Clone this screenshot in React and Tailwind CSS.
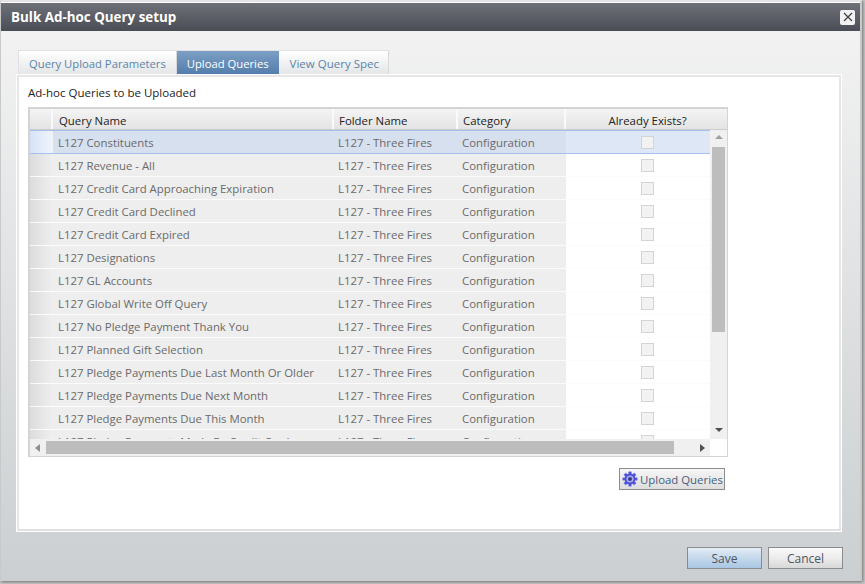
const names = [
  "L127 Constituents",
  "L127 Revenue - All",
  "L127 Credit Card Approaching Expiration",
  "L127 Credit Card Declined",
  "L127 Credit Card Expired",
  "L127 Designations",
  "L127 GL Accounts",
  "L127 Global Write Off Query",
  "L127 No Pledge Payment Thank You",
  "L127 Planned Gift Selection",
  "L127 Pledge Payments Due Last Month Or Older",
  "L127 Pledge Payments Due Next Month",
  "L127 Pledge Payments Due This Month",
  "L127 Pledge Payments Made By Credit Card",
];

function Gear() {
  return (
    <svg width="16" height="16" viewBox="0 0 16 16" className="shrink-0">
      <g fill="#5257dc" stroke="#b9bcf5" strokeWidth="0.4">
        <rect x="6.4" y="0.5" width="3.2" height="15" rx="0.8" />
        <rect x="6.4" y="0.5" width="3.2" height="15" rx="0.8" transform="rotate(45 8 8)" />
        <rect x="6.4" y="0.5" width="3.2" height="15" rx="0.8" transform="rotate(90 8 8)" />
        <rect x="6.4" y="0.5" width="3.2" height="15" rx="0.8" transform="rotate(135 8 8)" />
      </g>
      <circle cx="8" cy="8" r="5.4" fill="#4a4fd0" />
      <circle cx="8" cy="8" r="3.6" fill="#a9adf5" />
      <circle cx="8" cy="8" r="2" fill="#3a3a80" />
    </svg>
  );
}

function Row({ name, selected }) {
  return (
    <div className={selected
      ? "flex h-[24px] shrink-0 border-y border-[#a5c0ec] bg-[#dde7f6]"
      : "flex h-[23px] shrink-0 border-b border-[#fbfbfb] bg-white"}>
      <div className={`w-[23px] shrink-0 ${selected ? "bg-gradient-to-r from-[#d5e3f8] to-[#f0f5fc]" : "bg-gradient-to-r from-[#dcdcdc] to-[#efefef]"}`} />
      <div className={`flex w-[513px] shrink-0 items-center pt-[2px] text-[#6a6a6a] ${selected ? "bg-[#d6e0ee]" : "bg-[#eeeeee]"}`}>
        <div className="w-[281px] shrink-0 pl-[5px] whitespace-nowrap">{name}</div>
        <div className="w-[124px] shrink-0 pl-[4px] whitespace-nowrap">L127 - Three Fires</div>
        <div className="w-[108px] shrink-0 pl-[4px] whitespace-nowrap">Configuration</div>
      </div>
      <div className="flex w-[144px] shrink-0 items-center pl-[75px]">
        <div className="h-[13px] w-[13px] border border-[#d4d4d4] bg-[#f2f2f2]" />
      </div>
    </div>
  );
}

export default function App() {
  return (
    <div className="h-[584px] w-[865px] overflow-hidden bg-[#c8c8c8] text-[11.4px] font-['Open_Sans',_'Noto_Sans',_sans-serif]">
      <div className="flex h-[581px] w-[862px] flex-col border-t-2 border-l border-r-2 border-[#c9c9c9] border-t-[#e4e4e4] bg-gradient-to-b from-[#f4f4f4] to-[#cbcfd1] shadow-[1px_1px_3px_#707070]">
        <div className="flex h-[29px] shrink-0 items-center justify-between border-t border-white bg-gradient-to-b from-[#6e7178] to-[#4a4d55] pl-[10px] pr-[5px] text-[13.4px] font-bold text-white">
          <span>Bulk Ad-hoc Query setup</span>
          <div className="flex h-[15px] w-[15px] items-center justify-center rounded-[2px] bg-[#f2f2f2]">
            <svg width="10" height="10" viewBox="0 0 10 10" stroke="#3c3f46" strokeWidth="1.2"><path d="M1 1 L9 9 M9 1 L1 9" /></svg>
          </div>
        </div>

        <div className="flex flex-1 flex-col px-[16px] pt-[19px]">
          <div className="ml-[1px] flex h-[25px] w-fit shrink-0 border-t border-l border-[#e0e0e0] text-[11.25px]">
            <div className="flex items-center border-r border-[#d8d8d8] bg-gradient-to-b from-[#ffffff] to-[#e2e5e6] px-[10px] pt-[2px] text-[#5b84a8]">Query Upload Parameters</div>
            <div className="flex items-center bg-gradient-to-b from-[#7d9fc4] to-[#517cab] px-[10px] pt-[2px] text-white">Upload Queries</div>
            <div className="flex items-center border-r border-[#d8d8d8] bg-gradient-to-b from-[#ffffff] to-[#e2e5e6] pl-[11px] pr-[9px] pt-[2px] text-[11.5px] text-[#5b84a8]">View Query Spec</div>
          </div>

          <div className="flex h-[456px] w-[824px] shrink-0 flex-col border-2 border-[#e6e6e6] border-b-[#e0e0e0] bg-white pl-[9px] outline outline-1 outline-white">
            <div className="flex h-[30px] shrink-0 items-center pt-[1px] text-[11.5px] text-[#222]">Ad-hoc Queries to be Uploaded</div>

            <div className="flex h-[350px] w-[700px] shrink-0 flex-col border-2 border-r border-b border-[#d4d4d4]">
              <div className="flex h-[21px] shrink-0 border-b border-[#cccccc] bg-gradient-to-b from-[#f4f4f4] to-[#e4e4e4] text-[#222]">
                <div className="w-[23px] shrink-0 border-r-2 border-[#fafafa]" />
                <div className="flex w-[281px] shrink-0 items-center border-r-2 border-[#fafafa] pl-[6px] pt-[3px]">Query Name</div>
                <div className="flex w-[124px] shrink-0 items-center border-r-2 border-[#fafafa] pl-[5px] pt-[3px]">Folder Name</div>
                <div className="flex w-[108px] shrink-0 items-center border-r-2 border-[#fafafa] pl-[5px] pt-[3px]">Category</div>
                <div className="flex flex-1 items-center justify-center pl-[2px] pt-[3px]">Already Exists?</div>
              </div>

              <div className="flex min-h-0 flex-1">
                <div className="flex min-w-0 flex-1 flex-col">
                  <div className="flex h-[309px] flex-col overflow-hidden">
                    {names.map((n, i) => (
                      <Row key={n} name={n} selected={i === 0} />
                    ))}
                  </div>
                  <div className="flex h-[17px] shrink-0 items-center bg-[#f0f0f0] px-[4px]">
                    <svg width="8" height="8" viewBox="0 0 8 8" className="shrink-0"><path d="M6 0 L6 8 L1 4 Z" fill="#8f8f8f" /></svg>
                    <div className="ml-[4px] h-[13px] w-[628px] bg-[#bdbdbd]" />
                    <div className="flex-1" />
                    <svg width="8" height="8" viewBox="0 0 8 8" className="shrink-0"><path d="M2 0 L2 8 L7 4 Z" fill="#505050" /></svg>
                  </div>
                </div>
                <div className="flex w-[17px] shrink-0 flex-col">
                  <div className="flex h-[309px] flex-col items-center bg-[#f0f0f0] pt-[3px]">
                    <svg width="8" height="8" viewBox="0 0 8 8" className="shrink-0"><path d="M0 6 L8 6 L4 2 Z" fill="#a0a0a0" /></svg>
                    <div className="mt-[6px] h-[185px] w-[13px] shrink-0 bg-[#bdbdbd]" />
                    <div className="flex-1" />
                    <svg width="8" height="8" viewBox="0 0 8 8" className="mb-[5px] shrink-0"><path d="M0 2 L8 2 L4 6 Z" fill="#505050" /></svg>
                  </div>
                  <div className="h-[17px] bg-white" />
                </div>
              </div>
            </div>

            <div className="flex justify-end pr-[114px] pt-[11px]">
              <div className="flex h-[22px] w-[106px] items-center border border-[#8c8c8c] bg-gradient-to-b from-[#f6f6f6] to-[#dedede] pl-[2px] text-[#46607c]">
                <Gear />
                <span className="ml-[2px] whitespace-nowrap pt-[2px]">Upload Queries</span>
              </div>
            </div>
          </div>

          <div className="flex justify-end gap-[6px] pr-[1px] pt-[16px]">
            <div className="flex h-[22px] w-[75px] items-center justify-center border border-[#8c8c8c] bg-gradient-to-b from-[#e3ecf5] via-[#c5d9ec] to-[#a9c6e2] pt-[2px] text-[12px] text-[#4c5660]">Save</div>
            <div className="flex h-[22px] w-[75px] items-center justify-center border border-[#8c8c8c] bg-gradient-to-b from-[#fafafa] via-[#ececec] to-[#d8d8d8] pt-[2px] text-[12px] text-[#4c5660]">Cancel</div>
          </div>
        </div>
      </div>
    </div>
  );
}
